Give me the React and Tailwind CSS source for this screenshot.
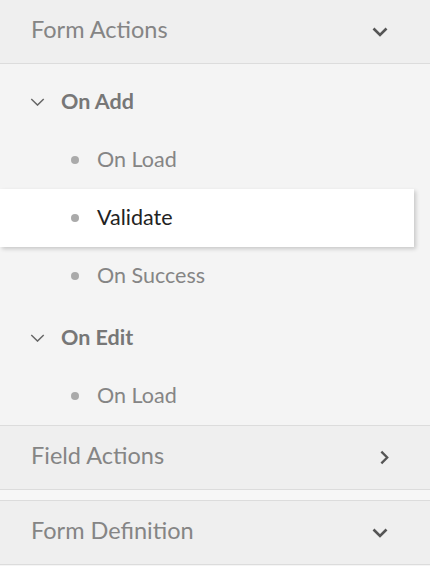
import { useState } from "react";

function ChevronDown({ className }) {
  return (
    <svg viewBox="0 0 16 10" className={className} fill="none">
      <path d="M1.5 1.5L8 8l6.5-6.5" stroke="currentColor" strokeWidth="2.6" />
    </svg>
  );
}

function ChevronRight({ className }) {
  return (
    <svg viewBox="0 0 10 16" className={className} fill="none">
      <path d="M1.5 1.5L8 8l-6.5 6.5" stroke="currentColor" strokeWidth="2.6" />
    </svg>
  );
}

function SmallChevron() {
  return (
    <svg viewBox="0 0 16 9" className="w-[15px] h-[8px] text-[#666]" fill="none">
      <path d="M1 1l7 7 7-7" stroke="currentColor" strokeWidth="1.6" />
    </svg>
  );
}

function SectionHeader({ title, open }) {
  return (
    <div className="flex items-center justify-between h-[63px] pl-[31px] pr-[42px] bg-[#efefef]">
      <span className="text-[23.5px] leading-none pb-[3px] text-[#858585]">{title}</span>
      {open ? (
        <ChevronDown className="w-[16px] h-[10px] text-[#555]" />
      ) : (
        <ChevronRight className="w-[9px] h-[15px] text-[#555] -mr-[1px]" />
      )}
    </div>
  );
}

function Item({ label, active }) {
  return (
    <div
      className={
        "flex items-center h-[58px] pl-[71px] " +
        (active ? "bg-white w-[414px] shadow-[2px_2px_4px_rgba(0,0,0,0.18)]" : "")
      }
    >
      <span className="w-[8px] h-[8px] rounded-full bg-[#aaaaaa]" />
      <span className={"ml-[18px] text-[21.5px] leading-none " + (active ? "text-[#222]" : "text-[#858585]")}>
        {label}
      </span>
    </div>
  );
}

function Group({ title, items, selected }) {
  return (
    <div>
      <div className="flex items-center h-[58px] pl-[30px]">
        <SmallChevron />
        <span className="ml-[16px] text-[21.5px] leading-none font-bold text-[#777]">{title}</span>
      </div>
      {items.map((it) => (
        <Item key={it} label={it} active={it === selected} />
      ))}
    </div>
  );
}

export default function App() {
  const [selected] = useState("Validate");

  return (
    <div className="w-[430px] h-[566px] bg-[#f5f5f5] font-['Lato',sans-serif] overflow-hidden">
      <div className="border-b border-[#dcdcdc]">
        <SectionHeader title="Form Actions" open />
      </div>
      <div className="bg-[#f4f4f4] pt-[9px]">
        <Group title="On Add" items={["On Load", "Validate", "On Success"]} selected={selected} />
        <div className="mt-[4px]">
          <Group title="On Edit" items={["On Load"]} />
        </div>
      </div>
      <div className="border-y border-[#dcdcdc]">
        <SectionHeader title="Field Actions" />
      </div>
      <div className="h-[10px] bg-[#f7f7f7]" />
      <div className="border-y border-[#dcdcdc]">
        <SectionHeader title="Form Definition" open />
      </div>
    </div>
  );
}
